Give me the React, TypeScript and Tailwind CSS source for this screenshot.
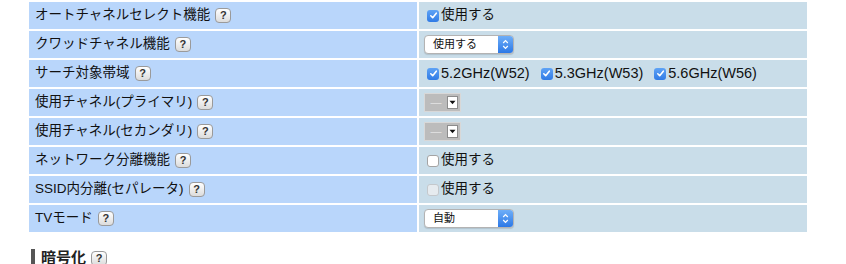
import React from 'react';

const FONT = '"Liberation Sans", "Noto Sans CJK JP", sans-serif';

function Help() {
  return (
    <span className="ml-[5px] inline-flex h-[15px] w-[16px] items-center justify-center rounded-[4px] border border-[#9a9a9a] bg-gradient-to-b from-white to-[#dcdcdc] text-[11px] font-bold leading-none text-[#333] align-middle">
      ?
    </span>
  );
}

function Check({ checked, disabled }: { checked?: boolean; disabled?: boolean }) {
  if (checked) {
    return (
      <span className="mr-[2px] inline-flex h-[12px] w-[12px] items-center justify-center rounded-[3px] bg-gradient-to-b from-[#5fa3f5] to-[#2f7ae5] align-middle">
        <svg width="9" height="9" viewBox="0 0 9 9">
          <path d="M1.8 4.8 L3.7 6.7 L7.3 2.2" fill="none" stroke="white" strokeWidth="1.6" strokeLinecap="round" strokeLinejoin="round" />
        </svg>
      </span>
    );
  }
  return (
    <span
      className={
        disabled
          ? 'mr-[2px] inline-block h-[12px] w-[12px] rounded-[3px] border border-[#c4c8cc] bg-[#e6ebef] align-middle'
          : 'mr-[2px] inline-block h-[12px] w-[12px] rounded-[3px] border border-[#a4a4a4] bg-white align-middle'
      }
    />
  );
}

function MacSelect({ label }: { label: string }) {
  return (
    <span className="ml-[5px] inline-flex h-[19px] w-[90px] items-stretch overflow-hidden rounded-[4px] border border-[#b3b3b3] bg-white align-middle shadow-[0_1px_1px_rgba(0,0,0,0.12)]">
      <span className="flex-1 pl-[8px] text-[11px] leading-[17px] text-[#111]">{label}</span>
      <span className="flex w-[15px] items-center justify-center bg-gradient-to-b from-[#6eaef8] to-[#2b78e6]">
        <svg width="7" height="11" viewBox="0 0 7 11">
          <path d="M1.2 4 L3.5 1.6 L5.8 4 M1.2 7 L3.5 9.4 L5.8 7" fill="none" stroke="white" strokeWidth="1.2" />
        </svg>
      </span>
    </span>
  );
}

function DisabledSelect() {
  return (
    <span className="ml-[5px] inline-flex h-[19px] w-[37px] items-center border border-[#d8d8d8] bg-[#bcbcbc] align-middle">
      <span className="flex-1 text-center text-[11px] leading-none text-[#e4e4e4]">—</span>
      <span className="mr-[2px] flex h-[13px] w-[11px] items-center justify-center border border-[#8c8c8c] bg-white">
        <svg width="7" height="5" viewBox="0 0 7 5">
          <path d="M0.5 0.8 L6.5 0.8 L3.5 4.3 Z" fill="#111" />
        </svg>
      </span>
    </span>
  );
}

const rows: { label: string; value: React.ReactNode }[] = [
  {
    label: 'オートチャネルセレクト機能',
    value: (
      <span className="ml-[8px]">
        <Check checked />使用する
      </span>
    ),
  },
  { label: 'クワッドチャネル機能', value: <MacSelect label="使用する" /> },
  {
    label: 'サーチ対象帯域',
    value: (
      <span className="ml-[8px] flex items-center gap-[11px] text-[14.5px]">
        <span>
          <Check checked />5.2GHz(W52)
        </span>
        <span>
          <Check checked />5.3GHz(W53)
        </span>
        <span>
          <Check checked />5.6GHz(W56)
        </span>
      </span>
    ),
  },
  { label: '使用チャネル(プライマリ)', value: <DisabledSelect /> },
  { label: '使用チャネル(セカンダリ)', value: <DisabledSelect /> },
  {
    label: 'ネットワーク分離機能',
    value: (
      <span className="ml-[8px]">
        <Check />使用する
      </span>
    ),
  },
  {
    label: 'SSID内分離(セパレータ)',
    value: (
      <span className="ml-[8px]">
        <Check disabled />使用する
      </span>
    ),
  },
  { label: 'TVモード', value: <MacSelect label="自動" /> },
];

export default function App() {
  return (
    <div className="h-[264px] w-[846px] overflow-hidden bg-white text-[13.5px] text-[#111]" style={{ fontFamily: FONT }}>
      <table className="ml-[27px] w-[782px] border-separate border-spacing-[2px]">
        <tbody>
          {rows.map((r) => (
            <tr key={r.label} className="h-[27px]">
              <td className="w-1/2 bg-[#b9d6fb] pl-[6px] align-middle">
                <span className="align-middle">{r.label}</span>
                <Help />
              </td>
              <td className="w-1/2 bg-[#c9dde9] align-middle">
                <div className="flex items-center">{r.value}</div>
              </td>
            </tr>
          ))}
        </tbody>
      </table>

      <div className="ml-[31px] mt-[13px] flex items-center">
        <span className="h-[18px] w-[4px] bg-[#555]" />
        <span className="ml-[6px] text-[15px] font-bold text-[#222]">暗号化</span>
        <Help />
      </div>
    </div>
  );
}
